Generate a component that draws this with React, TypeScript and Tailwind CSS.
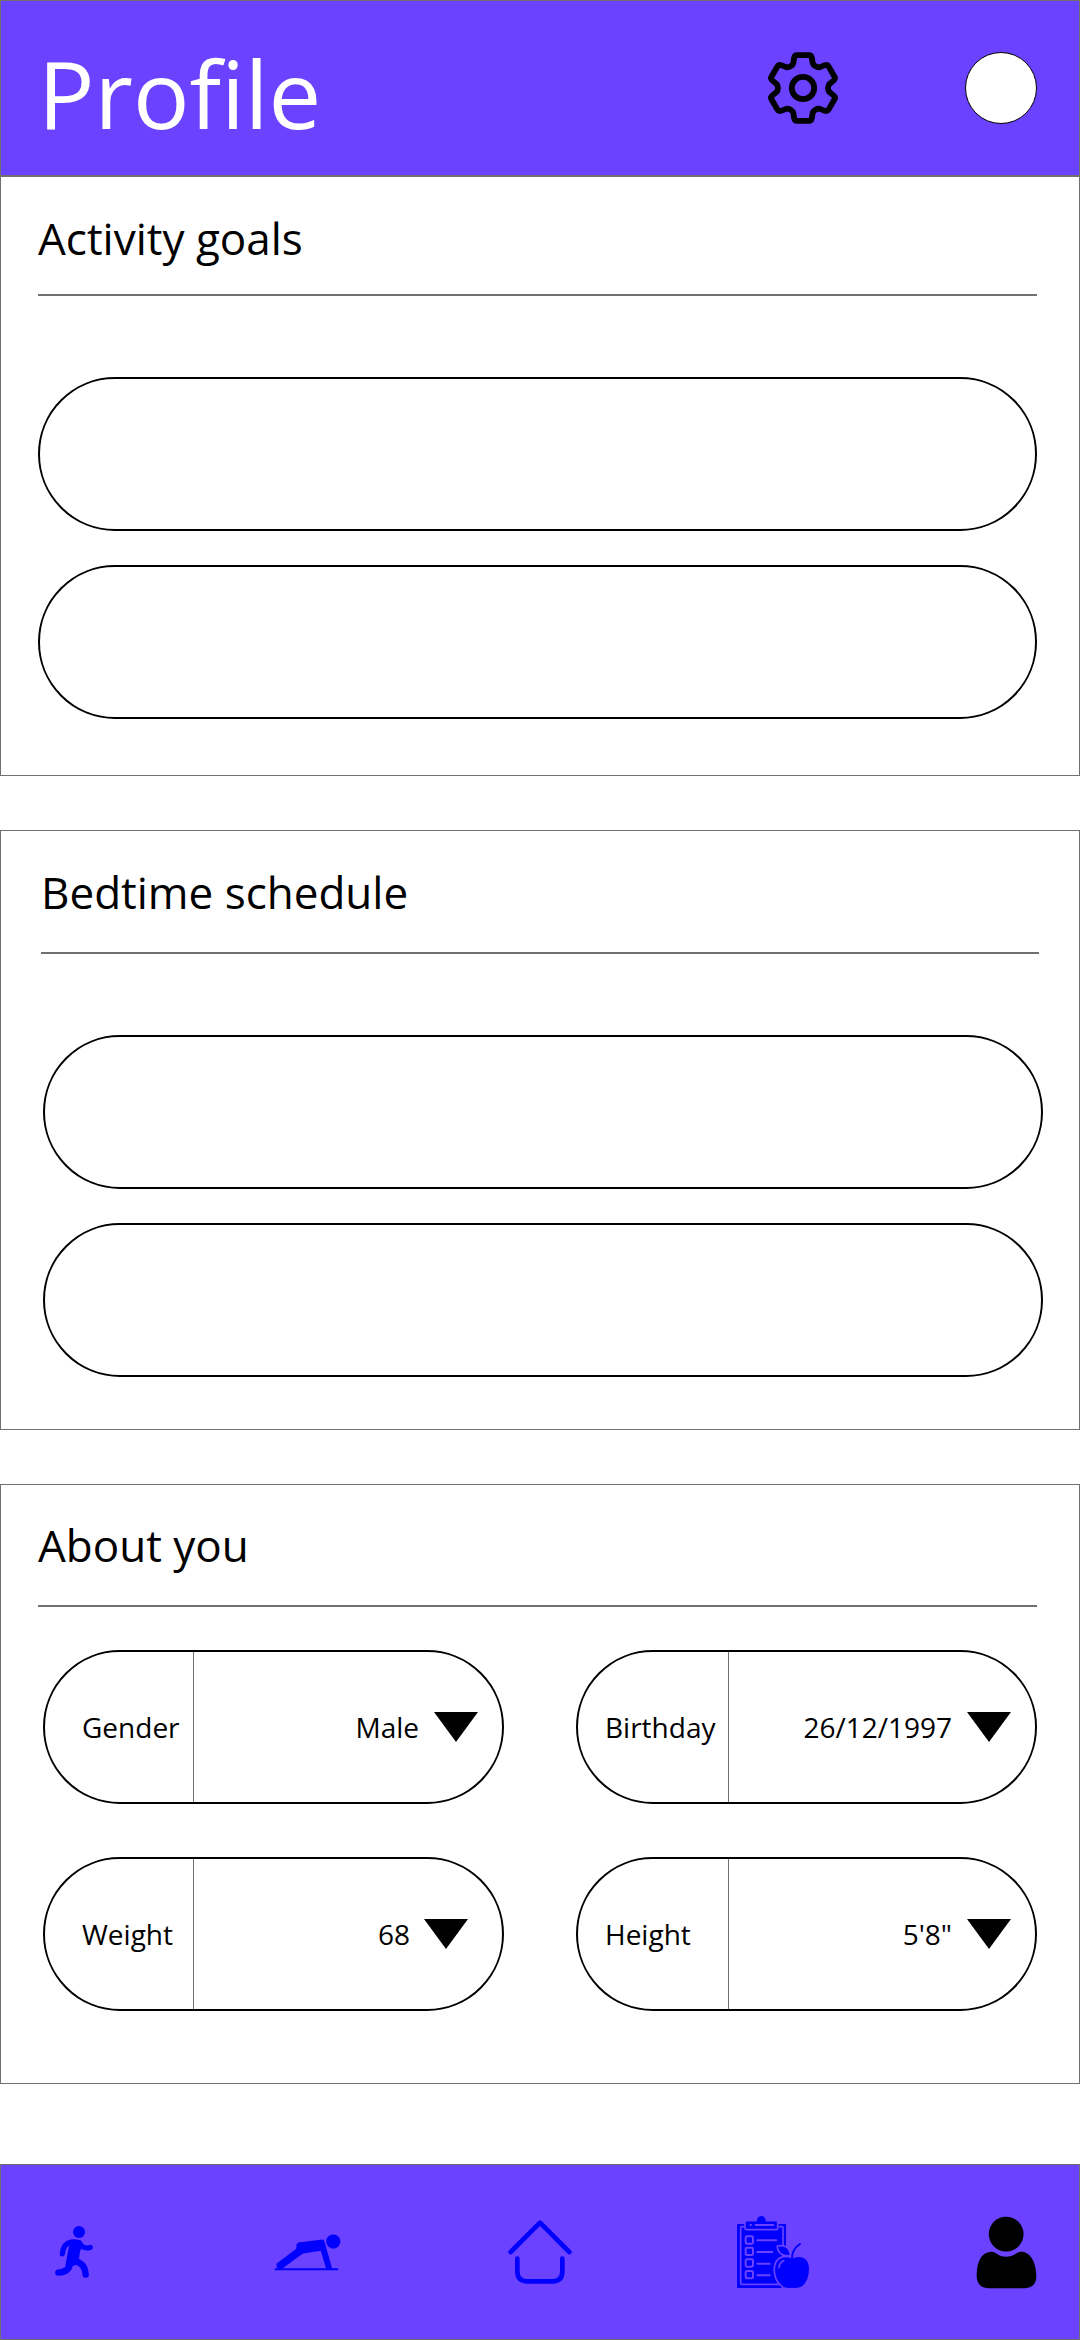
import { useState, type ReactNode } from "react";

type FieldProps = {
  id: string;
  label: string;
  options: string[];
  labelClass: string;
  selectClass: string;
  arrowClass: string;
};

const point = (r: number, deg: number) => {
  const a = (deg * Math.PI) / 180;
  return `${(r * Math.sin(a)).toFixed(2)} ${(-r * Math.cos(a)).toFixed(2)}`;
};

/* Six identical teeth, one for each 60 degree sector */
const gearPath =
  [0, 60, 120, 180, 240, 300]
    .map(
      (t, i) =>
        `${i === 0 ? "M" : "L"}${point(33.5, t + 10.3)}` +
        `Q${point(34, t + 14.1)} ${point(31.7, t + 16.1)}` +
        `L${point(26.8, t + 21.2)}` +
        `C${point(24.7, t + 24.6)} ${point(24.7, t + 35.4)} ${point(26.8, t + 38.8)}` +
        `L${point(31.7, t + 43.9)}` +
        `Q${point(34, t + 45.9)} ${point(33.5, t + 49.7)}`,
    )
    .join("") + "Z";

function GearIcon() {
  return (
    <svg viewBox="-36 -36 72 72" className="size-[72px]" fill="none" stroke="#000" strokeWidth="5.8" strokeLinejoin="round" aria-hidden="true">
      <path d={gearPath} />
      <circle r="11.2" />
    </svg>
  );
}

function RunIcon() {
  return (
    <svg viewBox="102 105 120 162" className="h-[54px] w-10" fill="none" stroke="#00f" strokeLinecap="round" strokeLinejoin="round" aria-hidden="true">
      <circle cx="177" cy="126" r="18" fill="#00f" stroke="none" />
      <path d="M150 149 Q166 145 180 151 L190 164 L180 184 L177 206 L182 216 L160 228 L136 228 L146 174 Z" fill="#00f" stroke="none" />
      <path d="M156 156 Q130 158 127 192" strokeWidth="15" />
      <path d="M178 158 Q190 180 211 172" strokeWidth="15" />
      <path d="M166 214 Q195 220 197 254" strokeWidth="19" />
      <path d="M150 220 Q148 246 115 248" strokeWidth="19" />
    </svg>
  );
}

function PushUpIcon() {
  return (
    <svg viewBox="760 130 202 112" className="h-[37px] w-[67px]" fill="#00f" aria-hidden="true">
      <circle cx="939" cy="153" r="21.5" />
      <rect x="762" y="234" width="192" height="6" rx="2" />
      <path d="M833 156 L906 147 Q911 147 912 152 L936 236 L918 237 L901 181 L847 189 L786 234 L776 239 L768 231 L767 220 L827 175 L828 161 Z" />
    </svg>
  );
}

function HomeIcon() {
  return (
    <svg viewBox="84 90 192 192" className="size-16" fill="none" stroke="#00f" strokeWidth="14" strokeLinecap="round" strokeLinejoin="round" aria-hidden="true">
      <path d="M92 186 L180 98 L268 186" />
      <path d="M112 206 V244 Q112 274 142 274 H218 Q247 274 247 244 V206" />
    </svg>
  );
}

function DietIcon() {
  return (
    <svg viewBox="78 75 222 222" className="size-[74px]" fill="none" strokeLinecap="round" strokeLinejoin="round" aria-hidden="true">
      <rect x="81" y="102" width="147" height="192" rx="2" fill="#00f" />
      <rect x="92" y="110" width="127" height="173" rx="3" stroke="#6a42ff" strokeWidth="5" />
      <rect x="105" y="92" width="98" height="27" rx="4" fill="#00f" stroke="#6a42ff" strokeWidth="5" />
      <path d="M140 97 Q141 78 154 78 Q167 78 168 97 Z" fill="#00f" />
      <g stroke="#6a42ff" strokeWidth="6">
        <path d="M121 105 H123 M137 105 H190" />
        <rect x="107" y="139" width="22" height="22" rx="4" />
        <rect x="107" y="173" width="22" height="22" rx="4" />
        <rect x="107" y="208" width="22" height="22" rx="4" />
        <rect x="107" y="243" width="22" height="22" rx="4" />
        <path d="M142 151 H199 M142 186 H187 M142 221 H179 M142 256 H179" />
      </g>
      <g fill="#00f" stroke="#6a42ff" strokeWidth="10" paintOrder="stroke">
        <path d="M246 206 Q232 199 218 203 Q196 210 195 238 Q195 272 220 290 Q233 296 246 293 Q262 297 276 289 Q297 272 297 237 Q296 201 266 201 Q256 201 246 206 Z" />
        <path d="M204 170 Q236 165 239 195 Q208 197 204 170 Z" />
      </g>
      <path d="M246 208 Q245 178 270 162" stroke="#00f" strokeWidth="6" />
      <path d="M207 233 Q208 218 221 212" stroke="#6a42ff" strokeWidth="5" />
    </svg>
  );
}

function PersonIcon() {
  return (
    <svg viewBox="76 196 184 219" className="h-[73px] w-[61px]" fill="#000" aria-hidden="true">
      <circle cx="167" cy="250" r="52.5" />
      <path d="M78 375 C78 330 95 303 122 303 C138 303 142 318 167 318 C192 318 198 303 212 303 C240 303 258 335 258 378 C258 400 245 413 222 413 H113 C92 413 78 400 78 375 Z" />
    </svg>
  );
}

function Field({ id, label, options, labelClass, selectClass, arrowClass }: FieldProps) {
  const [value, setValue] = useState(options[0]);
  return (
    <div className="relative flex h-[154px] items-stretch overflow-hidden rounded-[77px] border-2 border-black text-[28px]">
      <label htmlFor={id} className={`flex shrink-0 items-center border-r border-[#707070] ${labelClass}`}>
        {label}
      </label>
      <select
        id={id}
        value={value}
        onChange={(e) => setValue(e.target.value)}
        className={`min-w-0 flex-1 appearance-none bg-transparent text-right [text-align-last:right] ${selectClass}`}
      >
        {options.map((o) => (
          <option key={o}>{o}</option>
        ))}
      </select>
      <svg viewBox="0 0 44 30" className={`pointer-events-none absolute inset-y-0 my-auto h-[30px] w-11 ${arrowClass}`} aria-hidden="true">
        <path d="M0 0 H44 L22 30 Z" />
      </svg>
    </div>
  );
}

function Section({ title, className, children }: { title: string; className: string; children: ReactNode }) {
  return (
    <section className={`border border-[#707070] ${className}`}>
      <h2 className="text-[44px] leading-[64px]">{title}</h2>
      {children}
    </section>
  );
}

const slot = "block h-[154px] w-full rounded-[77px] border-2 border-black";

const tabs = [
  { label: "Activity", icon: <RunIcon /> },
  { label: "Exercises", icon: <PushUpIcon /> },
  { label: "Home", icon: <HomeIcon /> },
  { label: "Diet plan", icon: <DietIcon /> },
  { label: "Profile", icon: <PersonIcon /> },
];

export default function App() {
  return (
    <div className="flex min-h-screen flex-col bg-white font-['Open_Sans','Noto_Sans',sans-serif] text-black">
      <header className="flex h-44 items-center justify-between border border-[#707070] bg-[#6a42ff] pr-[42px] pl-[37px]">
        <h1 className="pt-2.5 text-[94px] leading-none text-white">Profile</h1>
        <div className="flex items-center gap-[126px]">
          <button type="button" aria-label="Settings">
            <GearIcon />
          </button>
          <button type="button" aria-label="Account" className="size-[72px] rounded-full border border-black bg-white" />
        </div>
      </header>

      <main className="flex flex-col gap-[54px]">
        <Section title="Activity goals" className="pt-[29px] pr-[42px] pb-14 pl-[37px]">
          <hr className="mt-6 border-t-2 border-[#707070]" />
          <div className="mt-[81px] flex flex-col gap-[34px]">
            <button type="button" aria-label="Activity goal 1" className={slot} />
            <button type="button" aria-label="Activity goal 2" className={slot} />
          </div>
        </Section>

        <Section title="Bedtime schedule" className="pt-[29px] pr-10 pb-[52px] pl-10">
          <hr className="mt-7 border-t-2 border-[#707070]" />
          <div className="mt-[81px] -mr-1 ml-0.5 flex flex-col gap-[34px]">
            <button type="button" aria-label="Bedtime 1" className={slot} />
            <button type="button" aria-label="Bedtime 2" className={slot} />
          </div>
        </Section>

        <Section title="About you" className="pt-7 pr-[42px] pb-[72px] pl-[37px]">
          <hr className="mt-7 border-t-2 border-[#707070]" />
          <div className="mt-[43px] ml-[5px] grid grid-cols-2 gap-x-[72px] gap-y-[53px]">
            <Field id="gender" label="Gender" options={["Male", "Female", "Other"]} labelClass="w-[149px] pl-[37px]" selectClass="pr-[83px]" arrowClass="right-6" />
            <Field id="birthday" label="Birthday" options={["26/12/1997"]} labelClass="w-[151px] pl-[27px]" selectClass="pr-[83px]" arrowClass="right-6" />
            <Field id="weight" label="Weight" options={["68", "69", "70"]} labelClass="w-[149px] pl-[37px]" selectClass="pr-[92px]" arrowClass="right-[34px]" />
            <Field id="height" label="Height" options={["5'8\"", "5'9\"", "5'10\""]} labelClass="w-[151px] pl-[27px]" selectClass="pr-[83px]" arrowClass="right-6" />
          </div>
        </Section>
      </main>

      <div className="mt-auto pt-20">
        <nav className="flex h-44 items-center justify-between border border-[#707070] bg-[#6a42ff] px-[37px]">
          {tabs.map((t) => (
            <button key={t.label} type="button" aria-label={t.label} className="flex size-[72px] items-center justify-center [&>svg]:shrink-0">
              {t.icon}
            </button>
          ))}
        </nav>
      </div>
    </div>
  );
}
